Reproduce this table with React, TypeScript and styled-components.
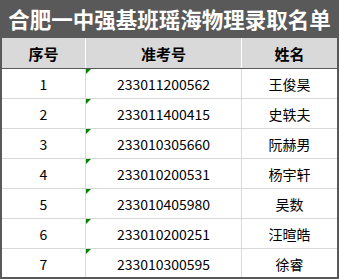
import React from 'react';
import styled, { createGlobalStyle } from 'styled-components';

const GlobalStyle = createGlobalStyle`
    html, body {
        margin: 0;
        padding: 0;
        background: #ffffff;
    }
`;

const Sheet = styled.div`
    box-sizing: border-box;
    width: 339px;
    height: 279px;
    overflow: hidden;
    border-left: 2px solid #595959;
    border-right: 2px solid #595959;
    border-bottom: 2px solid #595959;
    font-family: 'Noto Sans CJK SC', 'Noto Sans', sans-serif;
    color: #000;
`;

const Title = styled.div`
    height: 38px;
    background: #595959;
    color: #ffffff;
    font-size: 21.5px;
    font-weight: 700;
    line-height: 38px;
    text-align: center;
    letter-spacing: 0;
    white-space: nowrap;
`;

const Row = styled.div<{ $header?: boolean }>`
    display: grid;
    grid-template-columns: 84px 156px 95px;
    height: ${(p) => (p.$header ? '30px' : '29px')};
    border-bottom: 1px solid ${(p) => (p.$header ? '#595959' : '#d9d9d9')};
    background: ${(p) => (p.$header ? '#d9d9d9' : '#ffffff')};
    font-size: ${(p) => (p.$header ? '15px' : '14px')};
    font-weight: ${(p) => (p.$header ? 700 : 400)};

    &:last-child {
        border-bottom: none;
    }
`;

const Cell = styled.div<{ $header?: boolean; $divider?: boolean; $textFlag?: boolean }>`
    position: relative;
    display: flex;
    align-items: center;
    justify-content: center;
    border-right: ${(p) => (p.$divider ? `1px solid ${p.$header ? '#ffffff' : '#d9d9d9'}` : 'none')};

    &::before {
        content: '';
        display: ${(p) => (p.$textFlag ? 'block' : 'none')};
        position: absolute;
        top: 0;
        left: 0;
        width: 0;
        height: 0;
        border-top: 5px solid #008000;
        border-right: 5px solid transparent;
    }
`;

const rows = [
    { no: '1', id: '233011200562', name: '王俊昊' },
    { no: '2', id: '233011400415', name: '史轶夫' },
    { no: '3', id: '233010305660', name: '阮赫男' },
    { no: '4', id: '233010200531', name: '杨宇轩' },
    { no: '5', id: '233010405980', name: '吴数' },
    { no: '6', id: '233010200251', name: '汪暄皓' },
    { no: '7', id: '233010300595', name: '徐睿' },
];

export default function App() {
    return (
        <>
            <GlobalStyle />
            <Sheet>
                <Title>合肥一中强基班瑶海物理录取名单</Title>
                <Row $header>
                    <Cell $header $divider>序号</Cell>
                    <Cell $header $divider>准考号</Cell>
                    <Cell $header>姓名</Cell>
                </Row>
                {rows.map((r) => (
                    <Row key={r.no}>
                        <Cell $divider>{r.no}</Cell>
                        <Cell $divider $textFlag>{r.id}</Cell>
                        <Cell>{r.name}</Cell>
                    </Row>
                ))}
            </Sheet>
        </>
    );
}
